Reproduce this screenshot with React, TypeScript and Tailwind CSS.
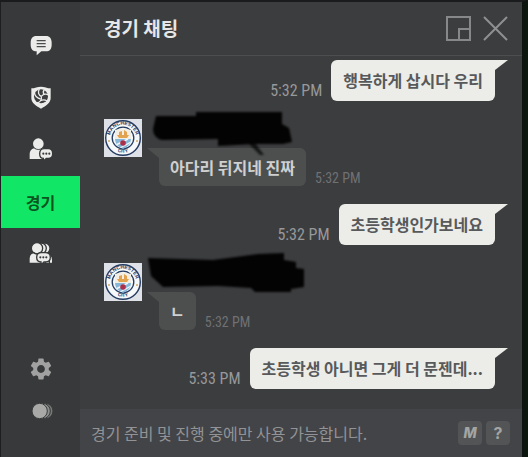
import type { ReactNode } from 'react';
import { MdSettings } from 'react-icons/md';

interface Message {
  id: number;
  own: boolean;
  text: string;
  time: string;
  scribble?: 'first' | 'second';
}

const messages: Message[] = [
  { id: 1, own: true, text: '행복하게 삽시다 우리', time: '5:32 PM' },
  { id: 2, own: false, text: '아다리 뒤지네 진짜', time: '5:32 PM', scribble: 'first' },
  { id: 3, own: true, text: '초등학생인가보네요', time: '5:32 PM' },
  { id: 4, own: false, text: 'ㄴ', time: '5:32 PM', scribble: 'second' },
  { id: 5, own: true, text: '초등학생 아니면 그게 더 문젠데...', time: '5:33 PM' },
];

function ChatIcon() {
  return (
    <svg viewBox="0 2 78 78" className="size-[26px]" aria-hidden="true">
      <path
        d="M25 11h29c11 0 17 8 17 20v6c0 13-6 20-17 20H40L26 69V57c-12 0-18-7-18-20v-6c0-12 6-20 17-20z"
        fill="#ecedeb"
      />
      <path d="M26 25h27M26 34h27M26 43h27" stroke="#4b4c4d" strokeWidth="3.5" />
    </svg>
  );
}

function ClubIcon() {
  return (
    <svg viewBox="0 3 78 78" className="size-[26px]" aria-hidden="true">
      <path
        d="M10 13C20 13 29 8 39 8s19 5 29 5v29c0 15-13 23-29 32C23 65 10 57 10 42z"
        fill="#ecedeb"
      />
      <circle cx="39" cy="37" r="21" fill="#3b3d3f" />
      <g fill="none" stroke="#ecedeb" strokeWidth="4">
        <path d="M40 37C31 33 29 24 34 15" />
        <path d="M40 37c7-8 16-9 22-3" />
        <path d="M40 37c2 10-4 18-14 20" />
        <path d="M19 26c2 11 9 17 19 19" />
        <path d="M57 51c-6-4-13-4-20-1" />
        <path d="M49 17c-4 4-4 9-1 14" />
      </g>
    </svg>
  );
}

function FriendIcon() {
  return (
    <svg viewBox="0 3 78 78" className="size-[26px]" aria-hidden="true">
      <circle cx="31" cy="23" r="16" fill="#ecedeb" />
      <path d="M5 69V54c0-8 5-15 13-17 8 6 18 6 26 0l12 9v23z" fill="#ecedeb" />
      <path
        d="M49 38h12c8 0 13 6 13 15s-5 14-13 14h-6l-9 8v-8c-7 0-11-5-11-14s5-15 14-15z"
        fill="#ecedeb"
        stroke="#37393b"
        strokeWidth="4"
      />
      <circle cx="46" cy="53" r="3.2" fill="#37393b" />
      <circle cx="55" cy="53" r="3.2" fill="#37393b" />
      <circle cx="64" cy="53" r="3.2" fill="#37393b" />
    </svg>
  );
}

function GroupIcon() {
  return (
    <svg viewBox="0 2 78 78" className="size-[26px]" aria-hidden="true">
      <g fill="#ecedeb" stroke="#37393b" strokeWidth="4">
        <circle cx="50" cy="24" r="16" />
        <path d="M36 69V50c0-7 6-11 14-11 15 0 24 7 24 19v11z" />
        <circle cx="39" cy="24" r="16" />
        <path d="M26 69V50c0-7 6-11 14-11 15 0 24 7 24 19v11z" />
        <circle cx="27" cy="24" r="17" />
        <path d="M3 69V54c0-8 5-15 13-17 7 5 15 5 22 0l14 9v23z" />
      </g>
      <path
        d="M40 37h13c8 0 14 5 14 14s-6 14-14 14h-5l-9 9v-9c-8 0-13-5-13-14s6-14 14-14z"
        fill="#ecedeb"
        stroke="#37393b"
        strokeWidth="4"
      />
      <circle cx="37" cy="51" r="3.2" fill="#37393b" />
      <circle cx="46" cy="51" r="3.2" fill="#37393b" />
      <circle cx="55" cy="51" r="3.2" fill="#37393b" />
    </svg>
  );
}

function OpacityIcon() {
  return (
    <svg viewBox="0 0 78 78" className="size-[26px]" aria-hidden="true">
      <g stroke="#37393b" strokeWidth="3">
        <circle cx="52" cy="39" r="23" fill="#777977" />
        <circle cx="44" cy="39" r="23" fill="#8e908d" />
        <circle cx="35" cy="39" r="23" fill="#a9aaa7" />
      </g>
    </svg>
  );
}

function ShrinkIcon() {
  return (
    <svg viewBox="0 0 25 25" className="size-[25px]" fill="none" stroke="#87888a" strokeWidth="2" aria-hidden="true">
      <path d="M1 1h23v23H1zM24 13H13v11" />
    </svg>
  );
}

function CloseIcon() {
  return (
    <svg viewBox="0 0 25 25" className="size-[25px]" fill="none" stroke="#8f9092" strokeWidth="2" aria-hidden="true">
      <path d="M1 1l23 23M24 1L1 24" />
    </svg>
  );
}

function Crest({ id }: { id: number }) {
  return (
    <svg viewBox="0 0 38 38" className="size-[38px] shrink-0 bg-[#dfe1e9]" role="img" aria-label="Manchester City">
      <defs>
        <path id={`top-${id}`} d="M6.2 21a13 13 0 1 1 25.6 0" />
        <path id={`bottom-${id}`} d="M6 26a14.8 14.8 0 0 0 26 0" />
        <clipPath id={`shield-${id}`}>
          <path d="M11 11Q19 8 27 11V20Q27 27 19 30Q11 27 11 20z" />
        </clipPath>
      </defs>
      <circle cx="19" cy="19" r="17.3" fill="#f7f8fa" stroke="#243c61" strokeWidth="1.4" />
      <circle cx="19" cy="19" r="10.8" fill="#f7f8fa" stroke="#243c61" strokeWidth="1.3" />
      <g clipPath={`url(#shield-${id})`}>
        <path d="M9 8h20v12H9z" fill="#f2eee4" />
        <path d="M9 20h20v11H9z" fill="#86b7d8" />
        <path d="M12 26l12-6M16 29l11-6" stroke="#eef4f8" strokeWidth="1.4" />
      </g>
      <path d="M13 16h12l-2 3h-8zM15 13l3-1v4h-3zM20 11l3 2v3h-3z" fill="#e3a34e" />
      <circle cx="19" cy="24" r="2.8" fill="#a92f4b" />
      <circle cx="5" cy="22" r=".9" fill="#c9a45c" />
      <circle cx="33" cy="22" r=".9" fill="#c9a45c" />
      <g className="font-['Liberation_Sans'] text-[5px] font-bold" fill="#243c61" textAnchor="middle">
        <text>
          <textPath href={`#top-${id}`} startOffset="50%">MANCHESTER</textPath>
        </text>
        <text>
          <textPath href={`#bottom-${id}`} startOffset="50%">CITY</textPath>
        </text>
      </g>
    </svg>
  );
}

// marker strokes that hide the sender name
function Scribble({ variant }: { variant: 'first' | 'second' }) {
  return (
    <svg viewBox="0 0 170 50" className="absolute -top-3 -left-4 h-[50px] w-[170px] blur-[1px]" aria-hidden="true">
      {variant === 'first' ? (
        <g fill="#030303">
          <path d="M13 9L53 9V5H139V17L146 21L149 35L140 37H112L75 39V32L19 33Q10 31 10 22z" />
          <path d="M105 36h7l9 12h-4z" opacity=".75" />
        </g>
      ) : (
        <path
          d="M5 7L70 9L115 3L141 2V9L153 11V17L161 18V36L148 38V41H112L108 37L75 35L20 36L8 25z"
          fill="#030303"
        />
      )}
    </svg>
  );
}

function OwnMessage({ message }: { message: Message }) {
  return (
    <li className="flex items-end justify-end gap-[9px] pr-[27px] pl-6">
      <time className="font-['Roboto_Condensed','Roboto',sans-serif] text-base leading-5 whitespace-nowrap text-[#97989a]">
        {message.time}
      </time>
      <p className="relative rounded-md rounded-tr-none bg-[#ecede9] px-3 py-2 text-base leading-[25px] font-bold text-[#58595b]">
        {message.text}
        <svg viewBox="0 0 13 11" className="absolute top-0 left-full h-[11px] w-[13px]" aria-hidden="true">
          <path d="M0 0h13L0 10z" fill="#ecede9" />
        </svg>
      </p>
    </li>
  );
}

function OtherMessage({ message }: { message: Message }) {
  return (
    <li className="flex gap-[17px] pr-[27px] pl-6">
      <Crest id={message.id} />
      <div>
        <div className="relative z-10 h-[29px]">
          <Scribble variant={message.scribble ?? 'first'} />
        </div>
        <div className="flex items-end gap-[9px]">
          <p className="relative rounded-md rounded-tl-none bg-[#4d4f4f] px-[11px] py-1.5 text-base leading-[26px] font-bold text-[#cfd0cf]">
            <svg viewBox="0 0 12 11" className="absolute top-0 right-full h-[11px] w-3" aria-hidden="true">
              <path d="M12 0H0l12 10z" fill="#4d4f4f" />
            </svg>
            {message.text}
          </p>
          <time className="font-['Roboto_Condensed','Roboto',sans-serif] text-sm leading-4 whitespace-nowrap text-[#707173]">
            {message.time}
          </time>
        </div>
      </div>
    </li>
  );
}

function TabButton({ label, children }: { label: string; children: ReactNode }) {
  return (
    <button type="button" aria-label={label} className="flex h-[52px] items-center justify-center">
      {children}
    </button>
  );
}

export default function App() {
  return (
    <div className="flex min-h-screen border-t-2 border-r-6 border-l border-t-[#1a1b1d] border-r-[#0c160f] border-l-[#1d1e20] bg-[#3c3d3f] font-['Noto_Sans_CJK_KR',sans-serif]">
      <nav className="flex w-[79px] shrink-0 flex-col bg-[#37393b] pt-[18px] pb-[25px]">
        <TabButton label="전체 채팅">
          <ChatIcon />
        </TabButton>
        <TabButton label="클럽 채팅">
          <ClubIcon />
        </TabButton>
        <TabButton label="친구 채팅">
          <FriendIcon />
        </TabButton>
        <button type="button" className="h-[52px] bg-[#12e667] text-base font-bold text-[#0b5420]">
          경기
        </button>
        <TabButton label="그룹 채팅">
          <GroupIcon />
        </TabButton>
        <button type="button" aria-label="설정" className="mt-auto flex h-[42px] items-center justify-center text-[#a0a1a0]">
          <MdSettings className="size-[26px]" />
        </button>
        <button type="button" aria-label="투명도" className="flex h-[42px] items-center justify-center">
          <OpacityIcon />
        </button>
      </nav>

      <main className="flex min-w-0 flex-1 flex-col">
        <header className="flex h-[54px] items-center border-b border-[#4d4e50] pr-[14px] pl-6">
          <h1 className="flex-1 text-[19px] font-bold text-[#e6e7e6]">경기 채팅</h1>
          <div className="flex gap-3">
            <button type="button" aria-label="작게 보기">
              <ShrinkIcon />
            </button>
            <button type="button" aria-label="닫기">
              <CloseIcon />
            </button>
          </div>
        </header>

        <ul className="flex flex-1 flex-col gap-[18px] pt-1 pb-5">
          {messages.map((message) =>
            message.own ? (
              <OwnMessage key={message.id} message={message} />
            ) : (
              <OtherMessage key={message.id} message={message} />
            )
          )}
        </ul>

        <footer className="flex h-12 items-center gap-1 bg-[#434447] pr-3 pl-[11px]">
          <input
            type="text"
            disabled
            aria-label="메시지 입력"
            placeholder="경기 준비 및 진행 중에만 사용 가능합니다."
            className="min-w-0 flex-1 bg-transparent text-base placeholder:text-[#929396]"
          />
          <button
            type="button"
            className="size-6 rounded bg-[#525455] font-['Inter',sans-serif] text-sm font-extrabold text-[#a3a5a4] italic"
          >
            M
          </button>
          <button
            type="button"
            className="size-6 rounded bg-[#525455] font-['Inter',sans-serif] text-base leading-6 font-bold text-[#a3a5a4]"
          >
            ?
          </button>
        </footer>
      </main>
    </div>
  );
}
